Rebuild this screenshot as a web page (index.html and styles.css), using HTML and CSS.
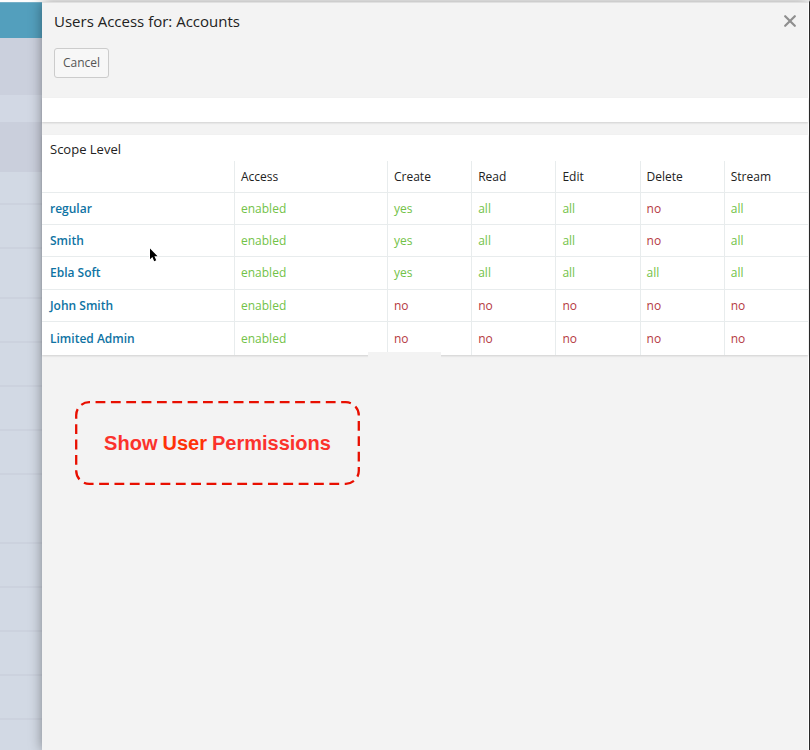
FILE: index.html
```html
<!DOCTYPE html>
<html lang="en">
<head>
<meta charset="utf-8">
<meta name="viewport" content="width=device-width, initial-scale=1">
<title>Users Access for: Accounts</title>
<link rel="stylesheet" href="styles.css">
</head>
<body>
<div class="page">
  <div class="backdrop" aria-hidden="true">
    <div class="strip-nav"></div>
    <div class="strip-head"></div>
    <div class="strip-bar"></div>
    <div class="strip-filter"></div>
    <div class="strip-row short"></div>
    <div class="strip-row"></div>
    <div class="strip-row tall"></div>
    <div class="strip-row"></div>
    <div class="strip-row"></div>
    <div class="strip-row"></div>
    <div class="strip-row"></div>
    <div class="strip-row double"></div>
    <div class="strip-row"></div>
    <div class="strip-row"></div>
    <div class="strip-row"></div>
    <div class="strip-row"></div>
    <div class="strip-rest"></div>
  </div>
  <main class="modal">
    <header class="modal-header">
      <div class="title-row">
        <h1>Users Access for: Accounts</h1>
        <button class="close" type="button" aria-label="Close">
          <svg viewBox="0 0 12 12" width="12" height="12"><path d="M1.2 1.2 10.8 10.8M10.8 1.2 1.2 10.8" fill="none" stroke="#8f8f8f" stroke-width="2.2" stroke-linecap="round"/></svg>
        </button>
      </div>
      <button class="cancel" type="button">Cancel</button>
    </header>
    <div class="band"></div>
    <section class="panel">
      <h2>Scope Level</h2>
      <table>
        <thead>
          <tr><th class="name"></th><th class="access">Access</th><th>Create</th><th>Read</th><th>Edit</th><th>Delete</th><th>Stream</th></tr>
        </thead>
        <tbody>
          <tr><td><a href="#">regular</a></td><td class="ok">enabled</td><td class="ok">yes</td><td class="ok">all</td><td class="ok">all</td><td class="no">no</td><td class="ok">all</td></tr>
          <tr><td><a href="#">Smith</a></td><td class="ok">enabled</td><td class="ok">yes</td><td class="ok">all</td><td class="ok">all</td><td class="no">no</td><td class="ok">all</td></tr>
          <tr><td><a href="#">Ebla Soft</a></td><td class="ok">enabled</td><td class="ok">yes</td><td class="ok">all</td><td class="ok">all</td><td class="ok">all</td><td class="ok">all</td></tr>
          <tr><td><a href="#">John Smith</a></td><td class="ok">enabled</td><td class="no">no</td><td class="no">no</td><td class="no">no</td><td class="no">no</td><td class="no">no</td></tr>
          <tr><td><a href="#">Limited Admin</a></td><td class="ok">enabled</td><td class="no">no</td><td class="no">no</td><td class="no">no</td><td class="no">no</td><td class="no">no</td></tr>
        </tbody>
      </table>
      <div class="patch"></div>
      <svg class="pointer" viewBox="0 0 12 18" width="12" height="18" aria-hidden="true"><path d="M2 1.5V12.2L4.4 10 6.2 14.2 8.2 13.3 6.4 9.3H9.6Z" fill="#000" stroke="#fff" stroke-width="2" stroke-linejoin="round" paint-order="stroke"/></svg>
    </section>
    <div class="callout">
      <svg class="outline" viewBox="0 0 285 84" aria-hidden="true"><rect x="1.2" y="1.2" width="282.6" height="81.6" rx="13" fill="none" stroke="#e80f00" stroke-width="2.3" stroke-dasharray="9.8 5.55" stroke-dashoffset="9"/></svg>
      <span>Show</span><span class="accent">User</span><span>Permissions</span>
    </div>
  </main>
</div>
</body>
</html>
```
FILE: styles.css
```css
* {
  box-sizing: border-box;
}

body {
  margin: 0;
  font-family: "Open Sans", sans-serif;
  font-size: 12px;
  line-height: 16px;
  color: #222;
  background: #f3f3f3;
}

.page {
  display: flex;
  min-height: 100vh;
  border-top: 2px solid #fdfdfd;
  border-right: 1px solid #333;
}

.backdrop {
  display: flex;
  flex-direction: column;
  flex: 0 0 42px;
  background: #d2d9e4;
}

.strip-nav {
  height: 36px;
  background: #539fbd;
  border-top: 1px solid #75b0c8;
}

.strip-head {
  height: 57px;
  background: #cbd0dd;
}

.strip-bar {
  height: 27px;
  background: #d2d8e4;
}

.strip-filter {
  height: 50px;
  background: #cacfdc;
}

.strip-row {
  flex: 0 1 44px;
  border-bottom: 2px solid #ccd2de;
}

.strip-row.short {
  flex-basis: 33px;
}

.strip-row.tall {
  flex-basis: 50px;
}

.strip-row.double {
  flex-basis: 69px;
}

.strip-rest {
  flex: 1 0 28px;
}

.modal {
  position: relative;
  flex: 1;
  min-width: 0;
  background: #f3f3f3;
  border-top: 1px solid #e0e0e0;
  border-right: 1px solid #fff;
  box-shadow: 0 0 12px rgba(0, 0, 0, 0.4);
}

.modal-header {
  padding: 8px 12px 20px;
}

.title-row {
  display: flex;
  align-items: center;
  justify-content: space-between;
  margin-bottom: 17px;
}

h1 {
  margin: 0;
  font-size: 15px;
  font-weight: 400;
  line-height: 20px;
}

.close {
  display: flex;
  padding: 0;
  border: 0;
  background: none;
}

.cancel {
  display: block;
  height: 30px;
  padding: 0 8px;
  border: 1px solid #ccc;
  border-radius: 3px;
  background: #f7f7f7;
  color: #555;
  font: inherit;
}

.band {
  height: 24px;
  background: #fff;
  box-shadow: 0 1px 2px rgba(0, 0, 0, 0.15);
}

.panel {
  position: relative;
  margin-top: 13px;
  background: #fff;
  box-shadow: 0 1px 2px rgba(0, 0, 0, 0.15);
}

h2 {
  margin: 0;
  padding: 6px 8px 4px;
  font-size: 13px;
  font-weight: 400;
  line-height: 16px;
}

table {
  width: 100%;
  table-layout: fixed;
  border-collapse: separate;
  border-spacing: 0;
}

th,
td {
  height: 32px;
  padding: 0 6px;
  border-left: 1px solid #e8eced;
  border-bottom: 1px solid #e8eced;
  font-weight: 400;
  text-align: left;
}

td {
  height: 32px;
}

tbody tr:nth-child(odd) td {
  height: 33px;
}

tbody tr:first-child td {
  height: 32px;
}

th:first-child,
td:first-child {
  padding-left: 8px;
  border-left: 0;
}

tbody tr:last-child td {
  border-bottom: 0;
}

th.name {
  width: 192px;
}

th.access {
  width: 153px;
}

td a {
  color: #0e73a3;
  font-weight: 600;
  text-decoration: none;
}

.ok {
  color: #72c248;
}

.no {
  color: #b5393f;
}

.patch {
  position: absolute;
  left: 326px;
  bottom: -3px;
  width: 73px;
  height: 6px;
  background: #f3f3f3;
}

.pointer {
  position: absolute;
  left: 106px;
  top: 112px;
}

.callout {
  position: relative;
  display: flex;
  align-items: center;
  justify-content: center;
  gap: 5px;
  width: 285px;
  max-width: 100%;
  min-height: 84px;
  margin: 46px 0 0 33px;
  color: #fb322c;
  font-family: "Liberation Sans", Arial, sans-serif;
  font-size: 20px;
  font-weight: 700;
  line-height: 24px;
}

.outline {
  position: absolute;
  inset: 0;
}

.accent {
  color: #ff3208;
}
```
